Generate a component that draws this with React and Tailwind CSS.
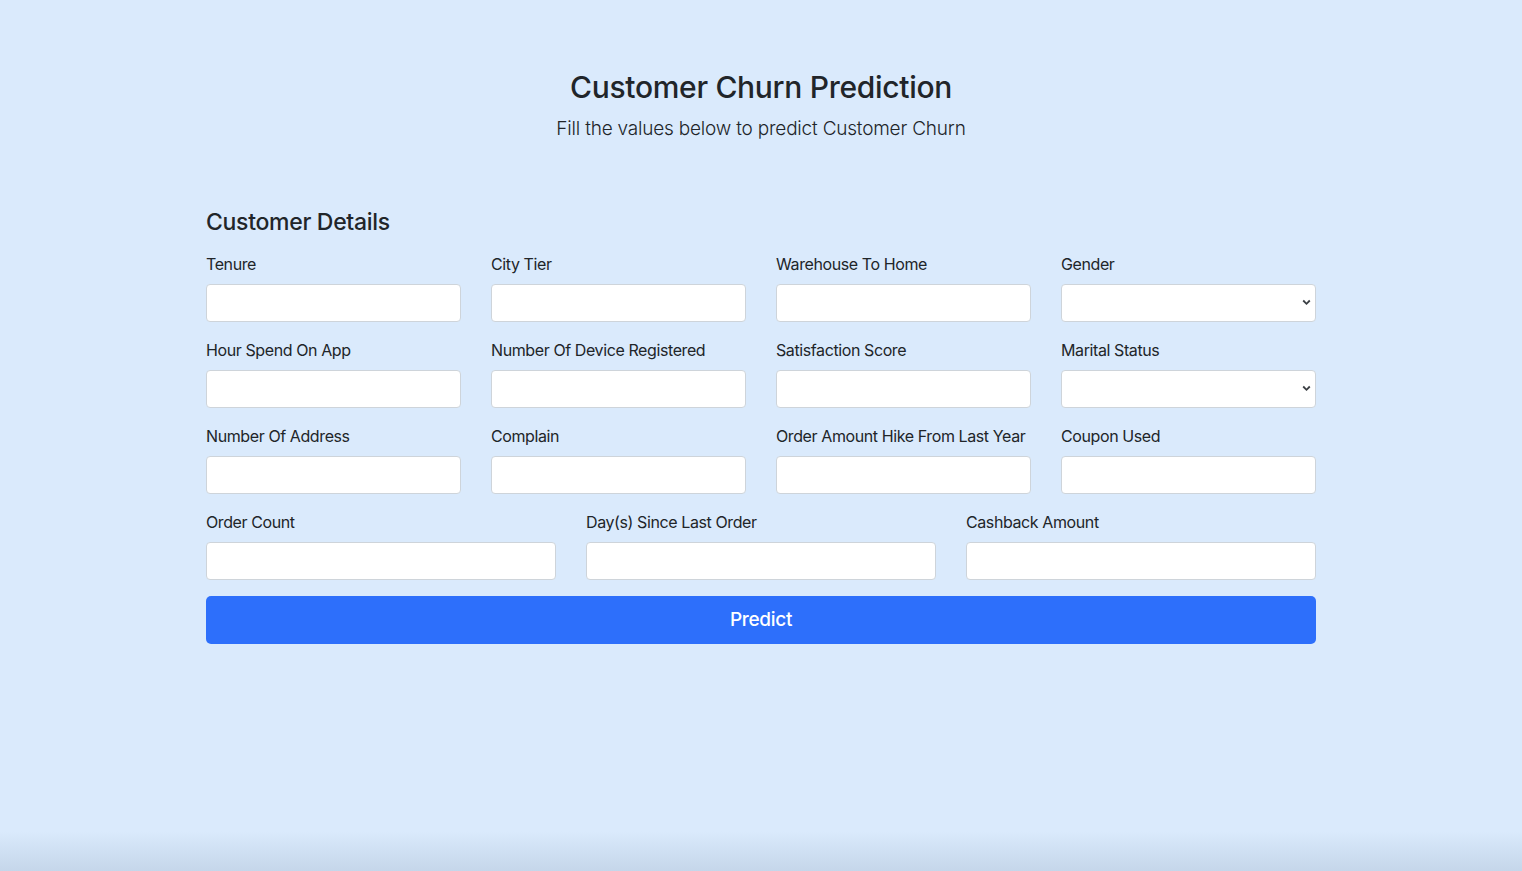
const font = { fontFamily: "Inter, 'Noto Sans', 'Liberation Sans', sans-serif" };

const Field = ({ label, select }) => {
  return (
    <div className="mb-4">
      <label className="block text-[16px] leading-6 mb-2 text-[#212529] tracking-[-0.4px] whitespace-nowrap">{label}</label>
      {select ? (
        <div className="relative">
          <select className="block w-full h-[38px] bg-white border border-[#ced4da] rounded-[4px] appearance-none px-3">
            <option></option>
          </select>
          {/* caret */}
          <svg className="absolute right-[5px] top-[15px] pointer-events-none" width="9" height="7" viewBox="0 0 9 7">
            <path d="M1.2 1.5 L4.5 4.8 L7.8 1.5" fill="none" stroke="#3b3f44" strokeWidth="1.8" />
          </svg>
        </div>
      ) : (
        <input type="text" className="block w-full h-[38px] bg-white border border-[#ced4da] rounded-[4px] px-3" />
      )}
    </div>
  );
};

const App = () => {
  return (
    <div className="h-[871px] bg-[#daeafc] flex flex-col overflow-hidden text-[#212529]" style={font}>
      <div className="w-[1110px] mx-auto pt-[68px]">
        {/* Header */}
        <div className="text-center">
          <h2 className="text-[30px] leading-[38px] font-medium tracking-[-0.3px] mb-2">Customer Churn Prediction</h2>
          <p className="text-[19px] leading-[30px] font-light tracking-[-0.2px]">Fill the values below to predict Customer Churn</p>
        </div>

        {/* Form */}
        <h4 className="mt-[64px] text-[23px] leading-[29px] font-medium tracking-[-0.3px] mb-[15px]">Customer Details</h4>
        <div className="grid grid-cols-4 gap-x-[30px]">
          <Field label="Tenure" />
          <Field label="City Tier" />
          <Field label="Warehouse To Home" />
          <Field label="Gender" select />
          <Field label="Hour Spend On App" />
          <Field label="Number Of Device Registered" />
          <Field label="Satisfaction Score" />
          <Field label="Marital Status" select />
          <Field label="Number Of Address" />
          <Field label="Complain" />
          <Field label="Order Amount Hike From Last Year" />
          <Field label="Coupon Used" />
        </div>
        <div className="grid grid-cols-3 gap-x-[30px]">
          <Field label="Order Count" />
          <Field label="Day(s) Since Last Order" />
          <Field label="Cashback Amount" />
        </div>
        <button className="w-full h-[48px] bg-[#2d6ffb] text-white text-[19px] tracking-[-0.3px] font-medium rounded-[5px]">Predict</button>
      </div>

      <div className="flex-1"></div>
      {/* bottom shade */}
      <div className="h-[40px] bg-gradient-to-b from-[#daeafc] to-[#c5d6ea]"></div>
    </div>
  );
};

export default App;
